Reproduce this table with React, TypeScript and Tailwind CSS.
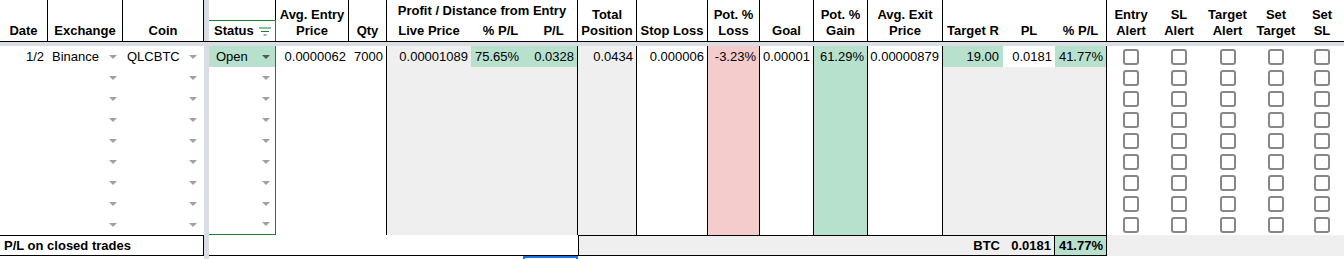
import clsx from "clsx";

const grid =
  "grid grid-cols-[48px_75px_81px_5px_67px_73px_38px_84px_59px_48px_59px_71px_52px_54px_54px_75px_60px_52px_52px_48px_48px_49px_48px_44px]";

const head = "flex flex-col items-center justify-end pb-[2px] text-center font-bold leading-4 border-black";
const num = "flex items-center justify-end pr-[3px]";

const Arrow = ({ dark }: { dark?: boolean }) => (
  <span
    className={clsx(
      "h-0 w-0 border-x-[4px] border-t-[4px] border-x-transparent",
      dark ? "border-t-[#4f5b54]" : "border-t-[#a0a0a0]"
    )}
  />
);

const Box = () => (
  <div className="flex items-center justify-center">
    <span className="h-4 w-4 rounded-[3px] border-2 border-[#878787] bg-white" />
  </div>
);

const DataRow = ({ first, last }: { first?: boolean; last?: boolean }) => (
  <div className={clsx(grid, "h-[21px]")}>
    <div className="flex items-center justify-end pr-[4px]">{first && "1/2"}</div>
    <div className="flex items-center justify-between pl-1 pr-[6px]">
      <span>{first && "Binance"}</span>
      <Arrow />
    </div>
    <div className="flex items-center justify-between pl-1 pr-[7px]">
      <span>{first && "QLCBTC"}</span>
      <Arrow />
    </div>
    <div className="bg-[#dadde2]" />
    <div
      className={clsx(
        "flex items-center justify-between border-r border-[#188038] pl-[7px] pr-[5px]",
        first && "bg-[#b7e1cd]",
        last && "border-b"
      )}
    >
      <span>{first && "Open"}</span>
      <Arrow dark={first} />
    </div>
    <div className={num}>{first && "0.0000062"}</div>
    <div className={clsx(num, "border-r border-black")}>{first && "7000"}</div>
    <div className={clsx(num, "bg-[#efefef]")}>{first && "0.00001089"}</div>
    <div className={clsx("flex items-center pl-[4px]", first ? "bg-[#b7e1cd]" : "bg-[#efefef]")}>
      {first && "75.65%"}
    </div>
    <div className={clsx(num, "border-r border-black", first ? "bg-[#b7e1cd]" : "bg-[#efefef]")}>
      {first && "0.0328"}
    </div>
    <div className={clsx(num, "border-r border-black bg-[#efefef]")}>{first && "0.0434"}</div>
    <div className={clsx(num, "border-r border-black")}>{first && "0.000006"}</div>
    <div className={clsx(num, "border-r border-black bg-[#f4cccc]")}>{first && "-3.23%"}</div>
    <div className={clsx(num, "border-r border-black")}>{first && "0.00001"}</div>
    <div className={clsx(num, "border-r border-black bg-[#b7e1cd]")}>{first && "61.29%"}</div>
    <div className={clsx(num, "border-r border-black")}>{first && "0.00000879"}</div>
    <div className={clsx(num, "pr-[4px]", first ? "bg-[#b7e1cd]" : "bg-[#efefef]")}>{first && "19.00"}</div>
    <div className={clsx(num, first ? "bg-white" : "bg-[#efefef]")}>{first && "0.0181"}</div>
    <div className={clsx(num, "border-r border-black", first ? "bg-[#b7e1cd]" : "bg-[#efefef]")}>
      {first && "41.77%"}
    </div>
    <Box />
    <Box />
    <Box />
    <Box />
    <Box />
  </div>
);

export default function App() {
  return (
    <div className="h-[259px] w-[1344px] overflow-hidden bg-white font-['Liberation_Sans',Arial,sans-serif] text-[13px] leading-4 text-black">
      {/* header */}
      <div className={clsx(grid, "h-[42px] grid-rows-[20px_21px] border-b border-black")}>
        <div className={clsx(head, "col-start-1 row-start-1 row-span-2 border-r")}>Date</div>
        <div className={clsx(head, "col-start-2 row-start-1 row-span-2 border-r")}>Exchange</div>
        <div className={clsx(head, "col-start-3 row-start-1 row-span-2 border-r")}>Coin</div>
        <div className="col-start-4 row-start-1 row-span-2 bg-[#dadde2]" />
        <div className="col-start-5 row-start-1 border-r border-black" />
        <div className="col-start-5 row-start-2 flex items-center justify-between border-r border-t border-[#188038] pl-[5px] pr-[4px] font-bold">
          <span>Status</span>
          <svg width="12" height="9" viewBox="0 0 12 9">
            <path d="M0 1h12M2 4.5h8M4.5 8h3" stroke="#188038" strokeWidth="1.2" />
          </svg>
        </div>
        <div className={clsx(head, "col-start-6 row-start-1 row-span-2 border-r")}>
          <span>Avg. Entry</span>
          <span>Price</span>
        </div>
        <div className={clsx(head, "col-start-7 row-start-1 row-span-2 border-r")}>Qty</div>
        <div className="col-start-8 col-span-3 row-start-1 flex items-center justify-center border-r border-black pt-[1px] font-bold">
          Profit / Distance from Entry
        </div>
        <div className={clsx(head, "col-start-8 row-start-2")}>Live Price</div>
        <div className={clsx(head, "col-start-9 row-start-2")}>% P/L</div>
        <div className={clsx(head, "col-start-10 row-start-2 border-r")}>P/L</div>
        <div className={clsx(head, "col-start-11 row-start-1 row-span-2 border-r")}>
          <span>Total</span>
          <span>Position</span>
        </div>
        <div className={clsx(head, "col-start-12 row-start-1 row-span-2 border-r")}>Stop Loss</div>
        <div className={clsx(head, "col-start-13 row-start-1 row-span-2 border-r")}>
          <span>Pot. %</span>
          <span>Loss</span>
        </div>
        <div className={clsx(head, "col-start-14 row-start-1 row-span-2 border-r")}>Goal</div>
        <div className={clsx(head, "col-start-15 row-start-1 row-span-2 border-r")}>
          <span>Pot. %</span>
          <span>Gain</span>
        </div>
        <div className={clsx(head, "col-start-16 row-start-1 row-span-2 border-r")}>
          <span>Avg. Exit</span>
          <span>Price</span>
        </div>
        <div className={clsx(head, "col-start-17 row-start-1 row-span-2")}>Target R</div>
        <div className={clsx(head, "col-start-18 row-start-1 row-span-2")}>PL</div>
        <div className={clsx(head, "col-start-19 row-start-1 row-span-2 border-r")}>% P/L</div>
        <div className={clsx(head, "col-start-20 row-start-1 row-span-2")}>
          <span>Entry</span>
          <span>Alert</span>
        </div>
        <div className={clsx(head, "col-start-21 row-start-1 row-span-2")}>
          <span>SL</span>
          <span>Alert</span>
        </div>
        <div className={clsx(head, "col-start-22 row-start-1 row-span-2")}>
          <span>Target</span>
          <span>Alert</span>
        </div>
        <div className={clsx(head, "col-start-23 row-start-1 row-span-2")}>
          <span>Set</span>
          <span>Target</span>
        </div>
        <div className={clsx(head, "col-start-24 row-start-1 row-span-2")}>
          <span>Set</span>
          <span>SL</span>
        </div>
      </div>

      {/* frozen rows divider */}
      <div className="h-[4px] bg-[#dadde2]" />

      <DataRow first />
      <DataRow />
      <DataRow />
      <DataRow />
      <DataRow />
      <DataRow />
      <DataRow />
      <DataRow />
      <DataRow last />

      {/* footer */}
      <div className={clsx(grid, "h-[21px]")}>
        <div className="col-span-3 flex items-center border-y border-r border-black pl-1 font-bold">
          P/L on closed trades
        </div>
        <div className="bg-[#dadde2]" />
        <div className="col-span-6 border-b border-black" />
        <div className="col-span-6 border-y border-l border-black bg-[#efefef]" />
        <div className={clsx(num, "border-y border-black bg-[#efefef] font-bold")}>BTC</div>
        <div className={clsx(num, "border-y border-r border-black bg-[#efefef] font-bold")}>0.0181</div>
        <div className={clsx(num, "border-y border-r border-black bg-[#b7e1cd] font-bold")}>41.77%</div>
        <div className="col-span-5 bg-[#efefef]" />
      </div>

      <div className="flex h-[3px]">
        <div className="w-[204px]" />
        <div className="w-[5px] bg-[#dadde2]" />
        <div className="ml-[314px] w-[55px] border-2 border-b-0 border-[#1a73e8]" />
      </div>
    </div>
  );
}
